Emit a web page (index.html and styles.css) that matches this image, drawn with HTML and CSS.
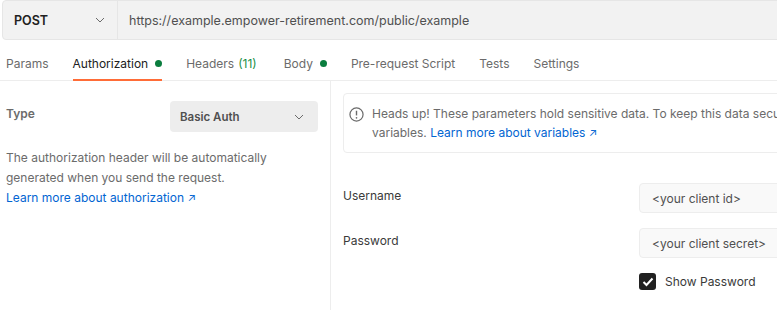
FILE: index.html
```html
<!DOCTYPE html>
<html lang="en">
<head>
    <meta charset="UTF-8">
    <title>Request</title>
    <link rel="stylesheet" href="styles.css">
</head>
<body>

    <div class="urlbar">
        <div class="method">
            <span>POST</span>
            <svg class="chev" width="10" height="6" viewBox="0 0 10 6"><path d="M1 1l4 4 4-4" fill="none" stroke="#6b6b6b" stroke-width="1"/></svg>
        </div>
        <div class="url">https://example.empower-retirement.com/public/example</div>
    </div>

    <div class="tabs">
        <div class="tab">Params</div>
        <div class="tab active">Authorization <span class="dot"></span></div>
        <div class="tab">Headers <span class="count">(11)</span></div>
        <div class="tab">Body <span class="dot"></span></div>
        <div class="tab">Pre-request Script</div>
        <div class="tab">Tests</div>
        <div class="tab">Settings</div>
    </div>

    <div class="main">
        <!-- left side -->
        <div class="left">
            <div class="typerow">
                <div class="label">Type</div>
                <div class="select">
                    <span>Basic Auth</span>
                    <svg width="10" height="6" viewBox="0 0 10 6"><path d="M1 1l4 4 4-4" fill="none" stroke="#6b6b6b" stroke-width="1"/></svg>
                </div>
            </div>
            <p class="desc">The authorization header will be automatically generated when you send the request.<br>
                <a href="#">Learn more about authorization <span class="arrow">&#8599;</span></a></p>
        </div>

        <!-- right side -->
        <div class="right">
            <div class="callout">
                <svg class="info" width="15" height="15" viewBox="0 0 16 16"><circle cx="8" cy="8" r="7" fill="none" stroke="#6b6b6b" stroke-width="1.3"/><path d="M8 4v5" stroke="#6b6b6b" stroke-width="1.5"/><circle cx="8" cy="11.5" r="0.9" fill="#6b6b6b"/></svg>
                <div class="msg">Heads up! These parameters hold sensitive data. To keep this data secure while working in a collaborative environment, we recommend using<br>variables. <a href="#">Learn more about variables <span class="arrow">&#8599;</span></a></div>
            </div>

            <div class="field first">
                <label>Username</label>
                <div class="input">&lt;your client id&gt;</div>
            </div>
            <div class="field">
                <label>Password</label>
                <div class="input">&lt;your client secret&gt;</div>
            </div>
            <div class="check">
                <span class="box"><svg width="12" height="10" viewBox="0 0 12 10"><path d="M1.5 5l3 3 6-6.5" fill="none" stroke="#fff" stroke-width="2"/></svg></span>
                Show Password
            </div>
        </div>
    </div>

</body>
</html>
```

FILE: styles.css
```css
* {
    box-sizing: border-box;
}

html {
    overflow: hidden;
}

body {
    margin: 0;
    font-family: Inter, 'Noto Sans', sans-serif;
    font-size: 12px;
    color: #212121;
    background: #fff;
    overflow: hidden;
    width: 777px;
    height: 310px;
}

.urlbar {
    display: flex;
    height: 40px;
    margin-left: 2px;
    width: 800px;
    background: #f2f2f2;
    border: 1px solid #e6e6e6;
    border-radius: 4px;
}

.method {
    flex: none;
    display: flex;
    align-items: center;
    justify-content: space-between;
    width: 115px;
    padding: 0 12px 0 11px;
    border-right: 1px solid #e6e6e6;
    font-weight: 600;
    font-size: 12.5px;
}

.url {
    display: flex;
    align-items: center;
    padding-left: 11px;
    color: #505050;
    font-size: 12.5px;
}

.tabs {
    display: flex;
    height: 41px;
    border-bottom: 1px solid #ededed;
    padding-left: 6px;
    gap: 24px;
}

.tab {
    display: flex;
    align-items: center;
    gap: 7px;
    color: #6b6b6b;
    height: 41px;
    border-bottom: 2px solid transparent;
    padding-top: 7px;
}

.tab.active {
    color: #212121;
    border-bottom-color: #ff6c37;
}

.dot {
    width: 7px;
    height: 7px;
    border-radius: 50%;
    background: #0a7d3e;
    display: inline-block;
}

.count {
    color: #1a8f48;
    margin-left: -3px;
    padding-right: 3px;
}

.main {
    display: flex;
    overflow: hidden;
}

.left {
    flex: none;
    width: 331px;
    border-right: 1px solid #ededed;
    height: 230px;
    padding: 20px 12px 0 6px;
}

.typerow {
    display: flex;
    justify-content: space-between;
}

.label {
    font-weight: 600;
    color: #6b6b6b;
    padding-top: 5px;
}

.select {
    width: 148px;
    height: 31px;
    background: #ededed;
    border-radius: 4px;
    display: flex;
    align-items: center;
    justify-content: space-between;
    padding: 0 14px 0 10px;
    font-size: 11.5px;
    font-weight: 600;
    color: #505050;
}

.desc {
    margin: 16px 0 0;
    line-height: 20px;
    color: #6b6b6b;
}

a {
    color: #0265d2;
    text-decoration: none;
}

.arrow {
    font-size: 11px;
}

.right {
    flex: none;
    padding: 12px 0 0 12px;
}

.callout {
    display: flex;
    align-items: flex-start;
    gap: 8px;
    width: 900px;
    border: 1px solid #ededed;
    border-radius: 4px;
    padding: 10px 8px 9px 5px;
}

.info {
    flex: none;
    margin-top: 3px;
}

.msg {
    color: #6b6b6b;
    line-height: 19px;
    white-space: nowrap;
}

.field {
    display: flex;
    align-items: center;
    height: 30px;
    margin-top: 15px;
}

.field.first {
    margin-top: 30px;
}

.field label {
    width: 296px;
    margin-top: -5px;
    color: #3a3a3a;
}

.input {
    width: 160px;
    height: 30px;
    background: #f9f9f9;
    border: 1px solid #ededed;
    border-radius: 4px;
    display: flex;
    align-items: center;
    padding-left: 12px;
    color: #505050;
}

.check {
    display: flex;
    align-items: center;
    gap: 9px;
    margin-left: 296px;
    margin-top: 15px;
    color: #3a3a3a;
}

.box {
    width: 17px;
    height: 17px;
    background: #212121;
    border-radius: 3px;
    display: flex;
    align-items: center;
    justify-content: center;
}
```
